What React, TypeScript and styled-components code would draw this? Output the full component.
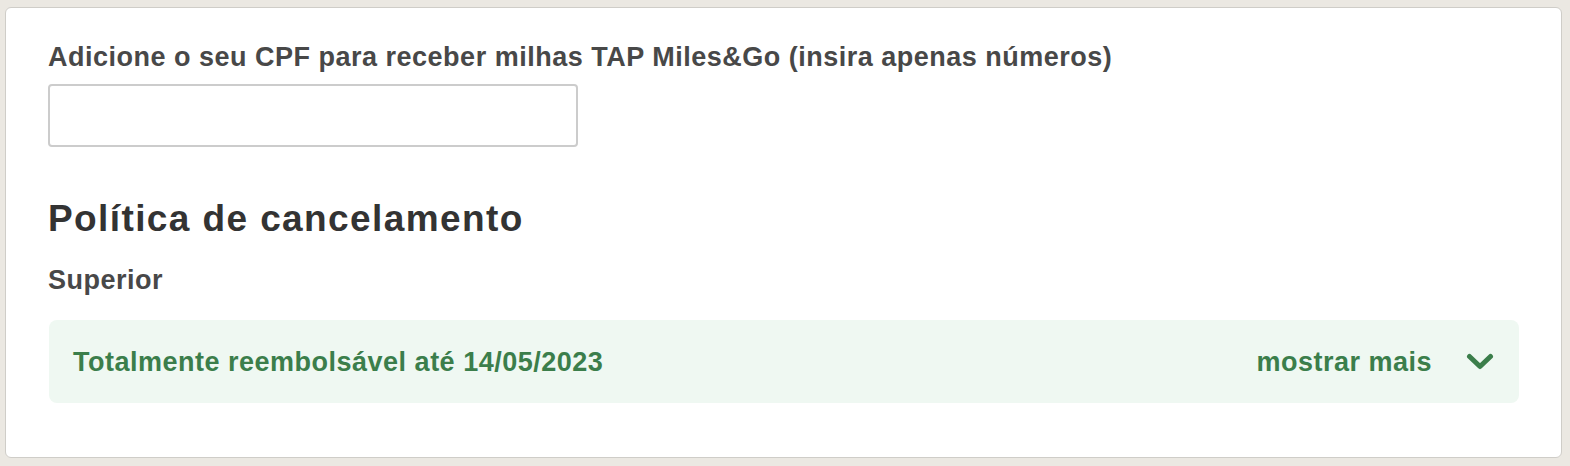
import { FC } from "react";
import styled, { createGlobalStyle } from "styled-components";

const GlobalStyle = createGlobalStyle`
  html, body {
    margin: 0;
    padding: 0;
    background: #ebe8e2;
  }

  body {
    font-family: "Liberation Sans", Arial, sans-serif;
  }
`;

const Page = styled.div`
  padding: 7px 8px 8px 5px;
`;

const Card = styled.section`
  box-sizing: border-box;
  height: 451px;
  background: #fff;
  border: 1px solid #cfcdc8;
  border-radius: 6px;
  padding: 34px 42px 0 42px;
`;

/* 参照画像のフォントは横に広いので letter-spacing で幅を合わせる */
const Label = styled.label`
  display: block;
  font-size: 27px;
  letter-spacing: 0.5px;
  font-weight: 700;
  color: #484848;
  line-height: 30px;
`;

const Input = styled.input`
  display: block;
  box-sizing: border-box;
  width: 530px;
  height: 63px;
  margin-top: 12px;
  border: 2px solid #cccccc;
  border-radius: 4px;
  font-size: 22px;
  padding: 0 14px;
  outline: none;
`;

const Heading = styled.h2`
  margin: 50px 0 0;
  font-size: 37px;
  letter-spacing: 1.4px;
  line-height: 44px;
  font-weight: 700;
  color: #333;
`;

const SubHeading = styled.h3`
  margin: 24px 0 0;
  font-size: 27px;
  letter-spacing: 0.5px;
  line-height: 30px;
  font-weight: 700;
  color: #484848;
`;

const PolicyBox = styled.div`
  display: flex;
  align-items: center;
  justify-content: space-between;
  margin: 25px 0 0 1px;
  height: 83px;
  padding: 0 25px 0 24px;
  background: #eff8f2;
  border-radius: 8px;
  color: #3b7e4b;
  font-size: 27px;
  letter-spacing: 0.5px;
  line-height: 30px;
  font-weight: 700;
`;

const Toggle = styled.button`
  display: flex;
  align-items: center;
  gap: 34px;
  background: none;
  border: none;
  padding: 0;
  font: inherit;
  letter-spacing: inherit;
  color: inherit;
  cursor: pointer;
`;

const Chevron: FC = () => (
  <svg width="28" height="18" viewBox="0 0 28 18" fill="none">
    <path
      d="M3.5 3.5 L14 13.5 L24.5 3.5"
      stroke="currentColor"
      strokeWidth="5"
      strokeLinecap="round"
      strokeLinejoin="round"
    />
  </svg>
);

const App: FC = () => (
  <>
    <GlobalStyle />
    <Page>
      <Card>
        <Label htmlFor="cpf">Adicione o seu CPF para receber milhas TAP Miles&amp;Go (insira apenas números)</Label>
        <Input id="cpf" type="text" />
        <Heading>Política de cancelamento</Heading>
        <SubHeading>Superior</SubHeading>
        <PolicyBox>
          <span>Totalmente reembolsável até 14/05/2023</span>
          <Toggle>
            mostrar mais
            <Chevron />
          </Toggle>
        </PolicyBox>
      </Card>
    </Page>
  </>
);

export default App;
